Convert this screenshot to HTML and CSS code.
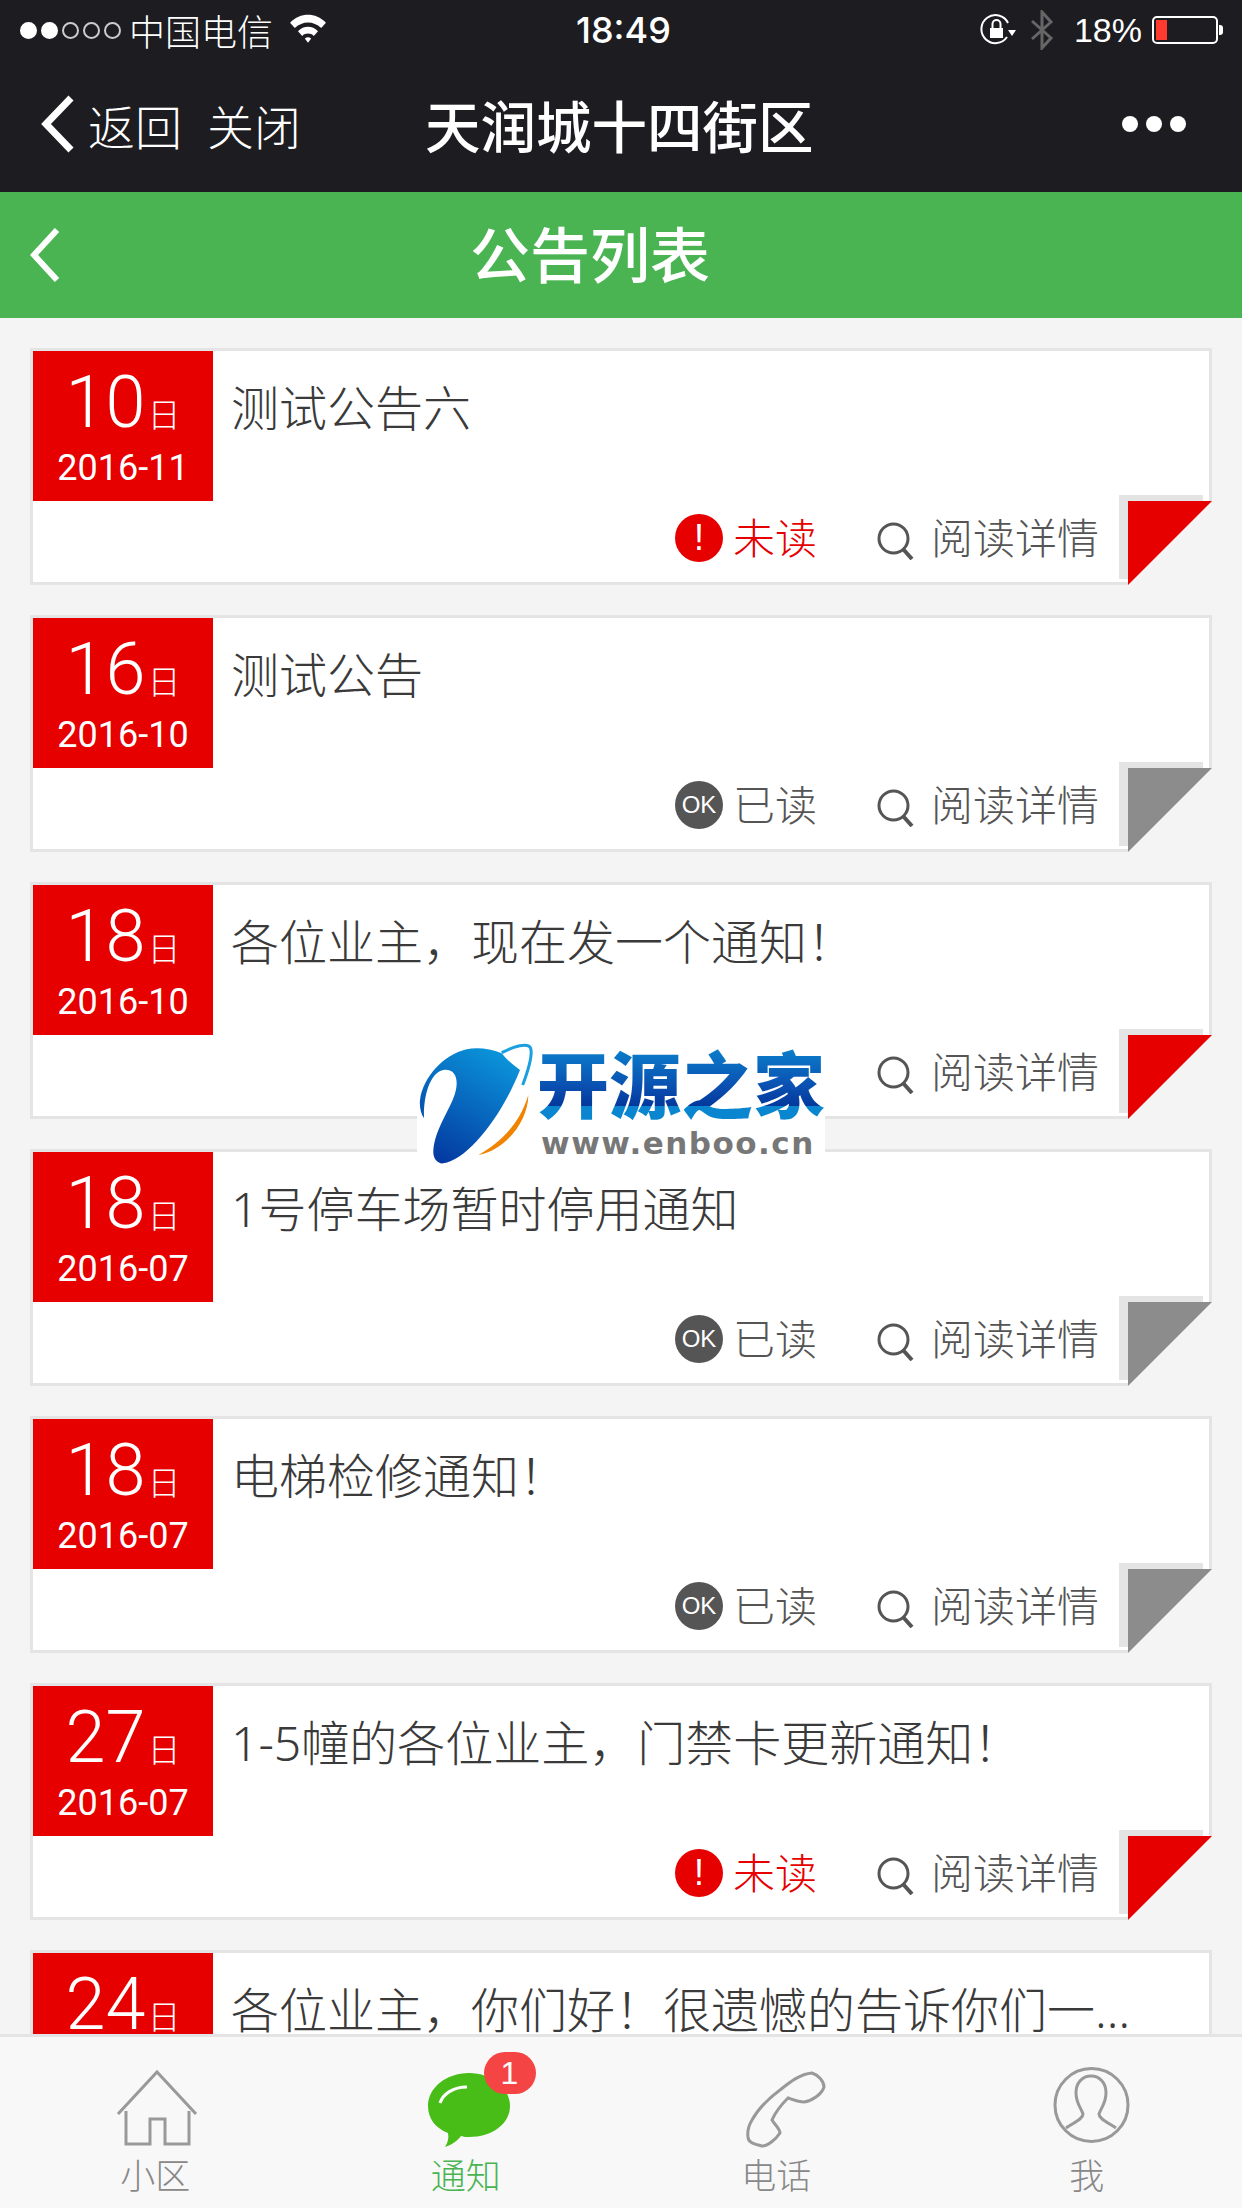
FILE: index.html
```html
<!DOCTYPE html>
<html lang="zh-CN">
<head>
  <meta charset="UTF-8" />
  <title>公告列表</title>
  <link rel="stylesheet" href="styles.css">
</head>
<body>

  <svg class="defs" width="0" height="0">
    <symbol id="icon-search" viewBox="0 0 38 38">
      <circle cx="16.500" cy="16.500" r="14.500" fill="none" stroke="#555" stroke-width="3" />
      <path d="M26 27 L35 37" fill="none" stroke="#555" stroke-width="4" />
    </symbol>
  </svg>

  <div class="page">

    <!-- 系统状态栏 -->
    <div class="statusbar">
      <div class="status-left">
        <span class="signal"><i class="on"></i><i class="on"></i><i></i><i></i><i></i></span>
        <span class="carrier">中国电信</span>
        <svg class="wifi" viewBox="0 0 36 28" width="38" height="30">
          <path d="M1 9 C11 -1 25 -1 35 9 L30.500 14 C23 7 13 7 5.500 14 Z" fill="#fff" />
          <path d="M8.500 17 C14 11.500 22 11.500 27.500 17 L23.500 21.500 C20.500 18.500 15.500 18.500 12.500 21.500 Z" fill="#fff" />
          <path d="M15 24 C17 22.500 19 22.500 21 24 L18 28 Z" fill="#fff" />
        </svg>
      </div>
      <span class="clock">18:49</span>
      <div class="status-right">
        <svg class="rotate-lock" viewBox="0 0 36 32" width="36" height="32">
          <path d="M27 23 A14 14 0 1 1 28 9" fill="none" stroke="#fff" stroke-width="2" />
          <path d="M28 16 L36 16 L32 22 Z" fill="#fff" />
          <rect x="10" y="14" width="13" height="10" fill="#fff" />
          <path d="M12.500 14 V10 A4 4 0 0 1 20.500 10 V14" fill="none" stroke="#fff" stroke-width="2" />
        </svg>
        <svg class="bluetooth" viewBox="0 0 24 40" width="24" height="40">
          <path d="M2 11 L21 28 L12 38 V2 L21 12 L2 29" fill="none" stroke="#666" stroke-width="3" />
        </svg>
        <span class="percent">18%</span>
        <span class="battery"><span class="battery-level"></span></span>
      </div>
    </div>

    <!-- 微信导航栏 -->
    <div class="navbar">
      <svg class="nav-back" viewBox="0 0 34 58" width="34" height="58">
        <path d="M30 3 L5 29 L30 55" fill="none" stroke="#fff" stroke-width="7" />
      </svg>
      <span class="nav-link">返回</span>
      <span class="nav-link nav-close">关闭</span>
      <span class="nav-title">天润城十四街区</span>
      <span class="nav-more"><i></i><i></i><i></i></span>
    </div>

    <div class="header">
      <svg class="header-back" viewBox="0 0 30 54" width="30" height="54">
        <path d="M27 2 L4 27 L27 52" fill="none" stroke="#fff" stroke-width="6" />
      </svg>
      <h1>公告列表</h1>
    </div>

    <!-- 公告列表 -->
    <div class="list">

      <div class="card">
        <div class="date"><div class="day">10<small>日</small></div><div class="month">2016-11</div></div>
        <div class="card-main">
          <div class="card-title">测试公告六</div>
          <div class="card-meta">
            <span class="badge badge-unread">!</span><span class="state state-unread">未读</span>
            <svg class="search"><use href="#icon-search" /></svg><span class="detail">阅读详情</span>
          </div>
        </div>
        <div class="corner corner-unread"></div>
      </div>

      <div class="card">
        <div class="date"><div class="day">16<small>日</small></div><div class="month">2016-10</div></div>
        <div class="card-main">
          <div class="card-title">测试公告</div>
          <div class="card-meta">
            <span class="badge badge-read">OK</span><span class="state">已读</span>
            <svg class="search"><use href="#icon-search" /></svg><span class="detail">阅读详情</span>
          </div>
        </div>
        <div class="corner corner-read"></div>
      </div>

      <div class="card">
        <div class="date"><div class="day">18<small>日</small></div><div class="month">2016-10</div></div>
        <div class="card-main">
          <div class="card-title">各位业主，现在发一个通知！</div>
          <div class="card-meta">
            <svg class="search"><use href="#icon-search" /></svg><span class="detail">阅读详情</span>
          </div>
        </div>
        <div class="corner corner-unread"></div>
      </div>

      <div class="card">
        <div class="date"><div class="day">18<small>日</small></div><div class="month">2016-07</div></div>
        <div class="card-main">
          <div class="card-title">1号停车场暂时停用通知</div>
          <div class="card-meta">
            <span class="badge badge-read">OK</span><span class="state">已读</span>
            <svg class="search"><use href="#icon-search" /></svg><span class="detail">阅读详情</span>
          </div>
        </div>
        <div class="corner corner-read"></div>
      </div>

      <div class="card">
        <div class="date"><div class="day">18<small>日</small></div><div class="month">2016-07</div></div>
        <div class="card-main">
          <div class="card-title">电梯检修通知！</div>
          <div class="card-meta">
            <span class="badge badge-read">OK</span><span class="state">已读</span>
            <svg class="search"><use href="#icon-search" /></svg><span class="detail">阅读详情</span>
          </div>
        </div>
        <div class="corner corner-read"></div>
      </div>

      <div class="card">
        <div class="date"><div class="day">27<small>日</small></div><div class="month">2016-07</div></div>
        <div class="card-main">
          <div class="card-title">1-5幢的各位业主，门禁卡更新通知！</div>
          <div class="card-meta">
            <span class="badge badge-unread">!</span><span class="state state-unread">未读</span>
            <svg class="search"><use href="#icon-search" /></svg><span class="detail">阅读详情</span>
          </div>
        </div>
        <div class="corner corner-unread"></div>
      </div>

      <div class="card">
        <div class="date"><div class="day">24<small>日</small></div></div>
        <div class="card-main">
          <div class="card-title">各位业主，你们好！很遗憾的告诉你们一件事情</div>
        </div>
      </div>

    </div>

    <!-- 底部导航 -->
    <div class="tabbar">
      <div class="tab">
        <svg class="tab-icon" viewBox="0 0 84 80" width="84" height="80">
          <path d="M5 47 L44 5 L83 47" fill="none" stroke="#999" stroke-width="3" />
          <path d="M76 44 V77 H52 V52 H37 V77 H13 V44" fill="none" stroke="#999" stroke-width="3" />
        </svg>
        <span>小区</span>
      </div>
      <div class="tab tab-active">
        <svg class="tab-icon" viewBox="0 0 84 80" width="84" height="80">
          <path d="M45 6 C68 6 86 21 86 39 C86 57 68 70 45 70 C42 70 40 70 37 69 C34 73 28 78 21 80 C24 75 25 71 24 66 C11 61 4 51 4 39 C4 21 22 6 45 6 Z" fill="#48bd18" />
          <path d="M16 36 C19 27 29 20 43 20" fill="none" stroke="#fff" stroke-width="3" />
        </svg>
        <span class="tab-badge">1</span>
        <span>通知</span>
      </div>
      <div class="tab">
        <svg class="tab-icon" viewBox="0 0 84 80" width="84" height="80">
          <path d="M78 6 C84 8 90 14 90 20 C88 27 78 34 70 35 C65 35 60 33 54 31 C47 38 41 46 38 53 C41 58 46 62 46 66 C42 72 34 79 28 79 C21 77 14 76 14 70 C13 63 15 58 18 53 C24 42 34 32 46 23 C56 15 66 7 78 6 Z" fill="none" stroke="#999" stroke-width="3" />
        </svg>
        <span>电话</span>
      </div>
      <div class="tab">
        <svg class="tab-icon" viewBox="0 0 84 80" width="84" height="80">
          <circle cx="46.500" cy="38" r="36.500" fill="none" stroke="#999" stroke-width="3" />
          <path d="M46 9 C55 9 61 16 61 26 C61 36 56 41 54 47 C54 52 62 55 71 61 M46 9 C37 9 31 16 31 26 C31 36 36 41 38 47 C38 52 30 55 21 61" fill="none" stroke="#999" stroke-width="3" />
        </svg>
        <span>我</span>
      </div>
    </div>

    <!-- 水印 -->
    <div class="watermark">
      <svg class="wm-logo" viewBox="0 0 1380 540" width="460" height="180">
        <defs>
          <linearGradient id="globe" x1="0.700" y1="0" x2="0.200" y2="1">
            <stop offset="0" stop-color="#0b93d9" />
            <stop offset="1" stop-color="#0338a0" />
          </linearGradient>
        </defs>
        <path d="M130 430 C200 420 300 300 360 150 C340 135 320 120 305 100 C270 85 230 82 200 88 C130 105 70 170 60 240 C58 260 62 280 72 295 C70 240 85 160 130 150 C170 145 180 185 160 235 C140 285 100 340 100 400 C102 420 115 432 130 430 Z" fill="url(#globe)" />
        <path d="M305 98 C340 80 385 65 392 85 C398 105 385 150 368 195" fill="none" stroke="#1a9fe0" stroke-width="9" />
        <path d="M385 225 C385 300 320 390 235 405 C300 370 360 310 385 225 Z" fill="#f08300" />
      </svg>
      <div class="wm-text">
        <span class="wm-name">开源之家</span>
        <span class="wm-url">www.enboo.cn</span>
      </div>
    </div>

  </div>

</body>
</html>
```

FILE: styles.css
```css
* {
  box-sizing: border-box;
}
html, body {
  margin: 0;
  padding: 0;
}
body {
  font-family: "Liberation Sans", "Noto Sans CJK SC", sans-serif;
  background-color: #f4f4f4;
  color: #444;
}
.defs {
  position: absolute;
}
.page {
  position: relative;
  width: 1242px;
  height: 2208px;
  overflow: hidden;
  display: flex;
  flex-direction: column;
}

/* 状态栏 */
.statusbar {
  height: 60px;
  flex: none;
  display: flex;
  align-items: center;
  background-color: #1c1c21;
  color: #fff;
  padding: 0 24px 0 20px;
}
.status-left {
  width: 556px;
  display: flex;
  align-items: center;
}
.signal {
  display: flex;
  gap: 4px;
}
.signal i {
  width: 17px;
  height: 17px;
  border: 2px solid #ccc;
  border-radius: 50%;
}
.signal i.on {
  background-color: #fff;
  border-color: #fff;
}
.carrier {
  font-size: 36px;
  font-weight: 300;
  margin-left: 8px;
}
.wifi {
  margin-left: 16px;
  margin-top: -4px;
}
.clock {
  font-family: Inter, "Liberation Sans", sans-serif;
  font-size: 36px;
  font-weight: 500;
}
.status-right {
  margin-left: auto;
  display: flex;
  align-items: center;
}
.bluetooth {
  margin-left: 14px;
}
.percent {
  font-size: 34px;
  margin-left: 20px;
}
.battery {
  width: 66px;
  height: 28px;
  margin-left: 10px;
  border: 2px solid #fff;
  border-radius: 5px;
  padding: 2px;
  position: relative;
}
.battery::after {
  content: "";
  position: absolute;
  right: -7px;
  top: 7px;
  width: 4px;
  height: 10px;
  background-color: #fff;
  border-radius: 0 3px 3px 0;
}
.battery-level {
  display: block;
  width: 11px;
  height: 100%;
  background-color: #ff3b30;
}

/* 导航栏 */
.navbar {
  height: 132px;
  flex: none;
  display: flex;
  align-items: center;
  background-color: #1c1c21;
  color: #fff;
  padding: 0 20px 4px 41px;
}
.nav-link {
  font-size: 47px;
  font-weight: 300;
  margin-left: 13px;
}
.nav-close {
  margin-left: 25px;
}
.nav-title {
  font-size: 55.500px;
  font-weight: 500;
  margin-left: 124px;
}
.nav-more {
  margin-left: auto;
  margin-right: 36px;
  display: flex;
  gap: 8px;
}
.nav-more i {
  width: 16px;
  height: 16px;
  border-radius: 50%;
  background-color: #fff;
}

/* 标题栏 */
.header {
  height: 126px;
  flex: none;
  display: flex;
  align-items: center;
  background-color: #4ab452;
  color: #fff;
  padding: 0 0 8px 30px;
}
.header-back {
  margin-top: 8px;
}
.header h1 {
  margin: 0 0 0 410px;
  font-size: 60px;
  font-weight: 500;
}

/* 列表 */
.list {
  flex: 1;
  min-height: 0;
  overflow: hidden;
  padding: 30px 30px 0;
  display: flex;
  flex-direction: column;
  gap: 30px;
}
.card {
  position: relative;
  height: 237px;
  flex: none;
  display: flex;
  background-color: #fff;
  border: 3px solid #e4e4e4;
}
.date {
  width: 180px;
  height: 150px;
  flex: none;
  background-color: #e60000;
  color: #fff;
  text-align: center;
  font-family: Roboto, "Noto Sans CJK SC", sans-serif;
  font-weight: 300;
}
.day {
  font-size: 72px;
  line-height: 72px;
  padding-top: 16px;
}
.day small {
  font-size: 33px;
  margin-left: 2px;
}
.month {
  font-size: 36px;
  line-height: 40px;
  margin-top: -4px;
  font-weight: 400;
}
.card-main {
  flex: 1;
  min-width: 0;
  display: flex;
  flex-direction: column;
  justify-content: space-between;
  padding: 21px 0 14px 18px;
}
.card-title {
  font-family: "Noto Sans", "Noto Sans CJK SC", sans-serif;
  font-size: 48px;
  line-height: 72px;
  font-weight: 300;
  color: #3a3a3a;
  width: 920px;
  white-space: nowrap;
  overflow: hidden;
  text-overflow: ellipsis;
}
.card-meta {
  display: flex;
  align-items: center;
  justify-content: flex-end;
  height: 60px;
  padding-right: 110px;
  font-size: 42px;
  font-weight: 300;
  color: #555;
}
.badge {
  width: 48px;
  height: 48px;
  border-radius: 50%;
  display: flex;
  align-items: center;
  justify-content: center;
  color: #fff;
  font-family: "Liberation Sans", sans-serif;
  font-weight: 400;
}
.badge-unread {
  background-color: #e60000;
  font-size: 36px;
}
.badge-read {
  background-color: #555;
  font-size: 24px;
}
.state {
  margin-left: 10px;
  margin-top: -6px;
}
.state-unread {
  color: #e60000;
}
.search {
  width: 38px;
  height: 38px;
  margin-left: 60px;
  margin-top: 6px;
}
.detail {
  margin-left: 16px;
  margin-top: -6px;
}

/* 折角 */
.corner {
  position: absolute;
  top: 144px;
  right: 6px;
  width: 84px;
  height: 84px;
  background-color: #e4e4e4;
}
.corner::before,
.corner::after {
  content: "";
  position: absolute;
  left: 9px;
  top: 6px;
  width: 84px;
  height: 84px;
}
.corner::before {
  background-color: #f4f4f4;
}
.corner::after {
  clip-path: polygon(0 0, 100% 0, 0 100%);
}
.corner-unread::after {
  background-color: #e60000;
}
.corner-read::after {
  background-color: #8c8c8c;
}

/* 底部导航 */
.tabbar {
  position: relative;
  height: 174px;
  flex: none;
  display: flex;
  background-color: #f8f8f8;
  border-top: 3px solid #e4e4e4;
  padding-top: 30px;
}
.tab {
  position: relative;
  width: 25%;
  display: flex;
  flex-direction: column;
  align-items: center;
  font-size: 35px;
  font-weight: 300;
  line-height: 40px;
  color: #888;
}
.tab-icon {
  overflow: visible;
  margin-bottom: 10px;
}
.tab-active {
  color: #4ab452;
}
.tab-badge {
  position: absolute;
  left: 173px;
  top: -15px;
  width: 52px;
  height: 42px;
  border-radius: 21px;
  background-color: #f44444;
  color: #fff;
  font-size: 32px;
  line-height: 42px;
  text-align: center;
  font-weight: 400;
}

/* 水印 */
.watermark {
  position: absolute;
  left: 417px;
  top: 1040px;
  width: 408px;
  height: 120px;
  background-color: #fff;
}
.wm-logo {
  position: absolute;
  left: -17px;
  top: -20px;
}
.wm-text {
  position: absolute;
  left: 120px;
  top: 8px;
  display: flex;
  flex-direction: column;
}
.wm-name {
  font-size: 72px;
  line-height: 78px;
  font-weight: 900;
  white-space: nowrap;
  background: linear-gradient(#0b7fcb 0%, #0a4fb0 50%, #03389c 74%, #0a86d0 75%, #0a86d0 100%);
  -webkit-background-clip: text;
  background-clip: text;
  color: transparent;
}
.wm-url {
  font-family: "DejaVu Sans", sans-serif;
  font-size: 31px;
  line-height: 34px;
  font-weight: 700;
  letter-spacing: 1.500px;
  margin-left: 4px;
  color: #777;
  white-space: nowrap;
}
```
